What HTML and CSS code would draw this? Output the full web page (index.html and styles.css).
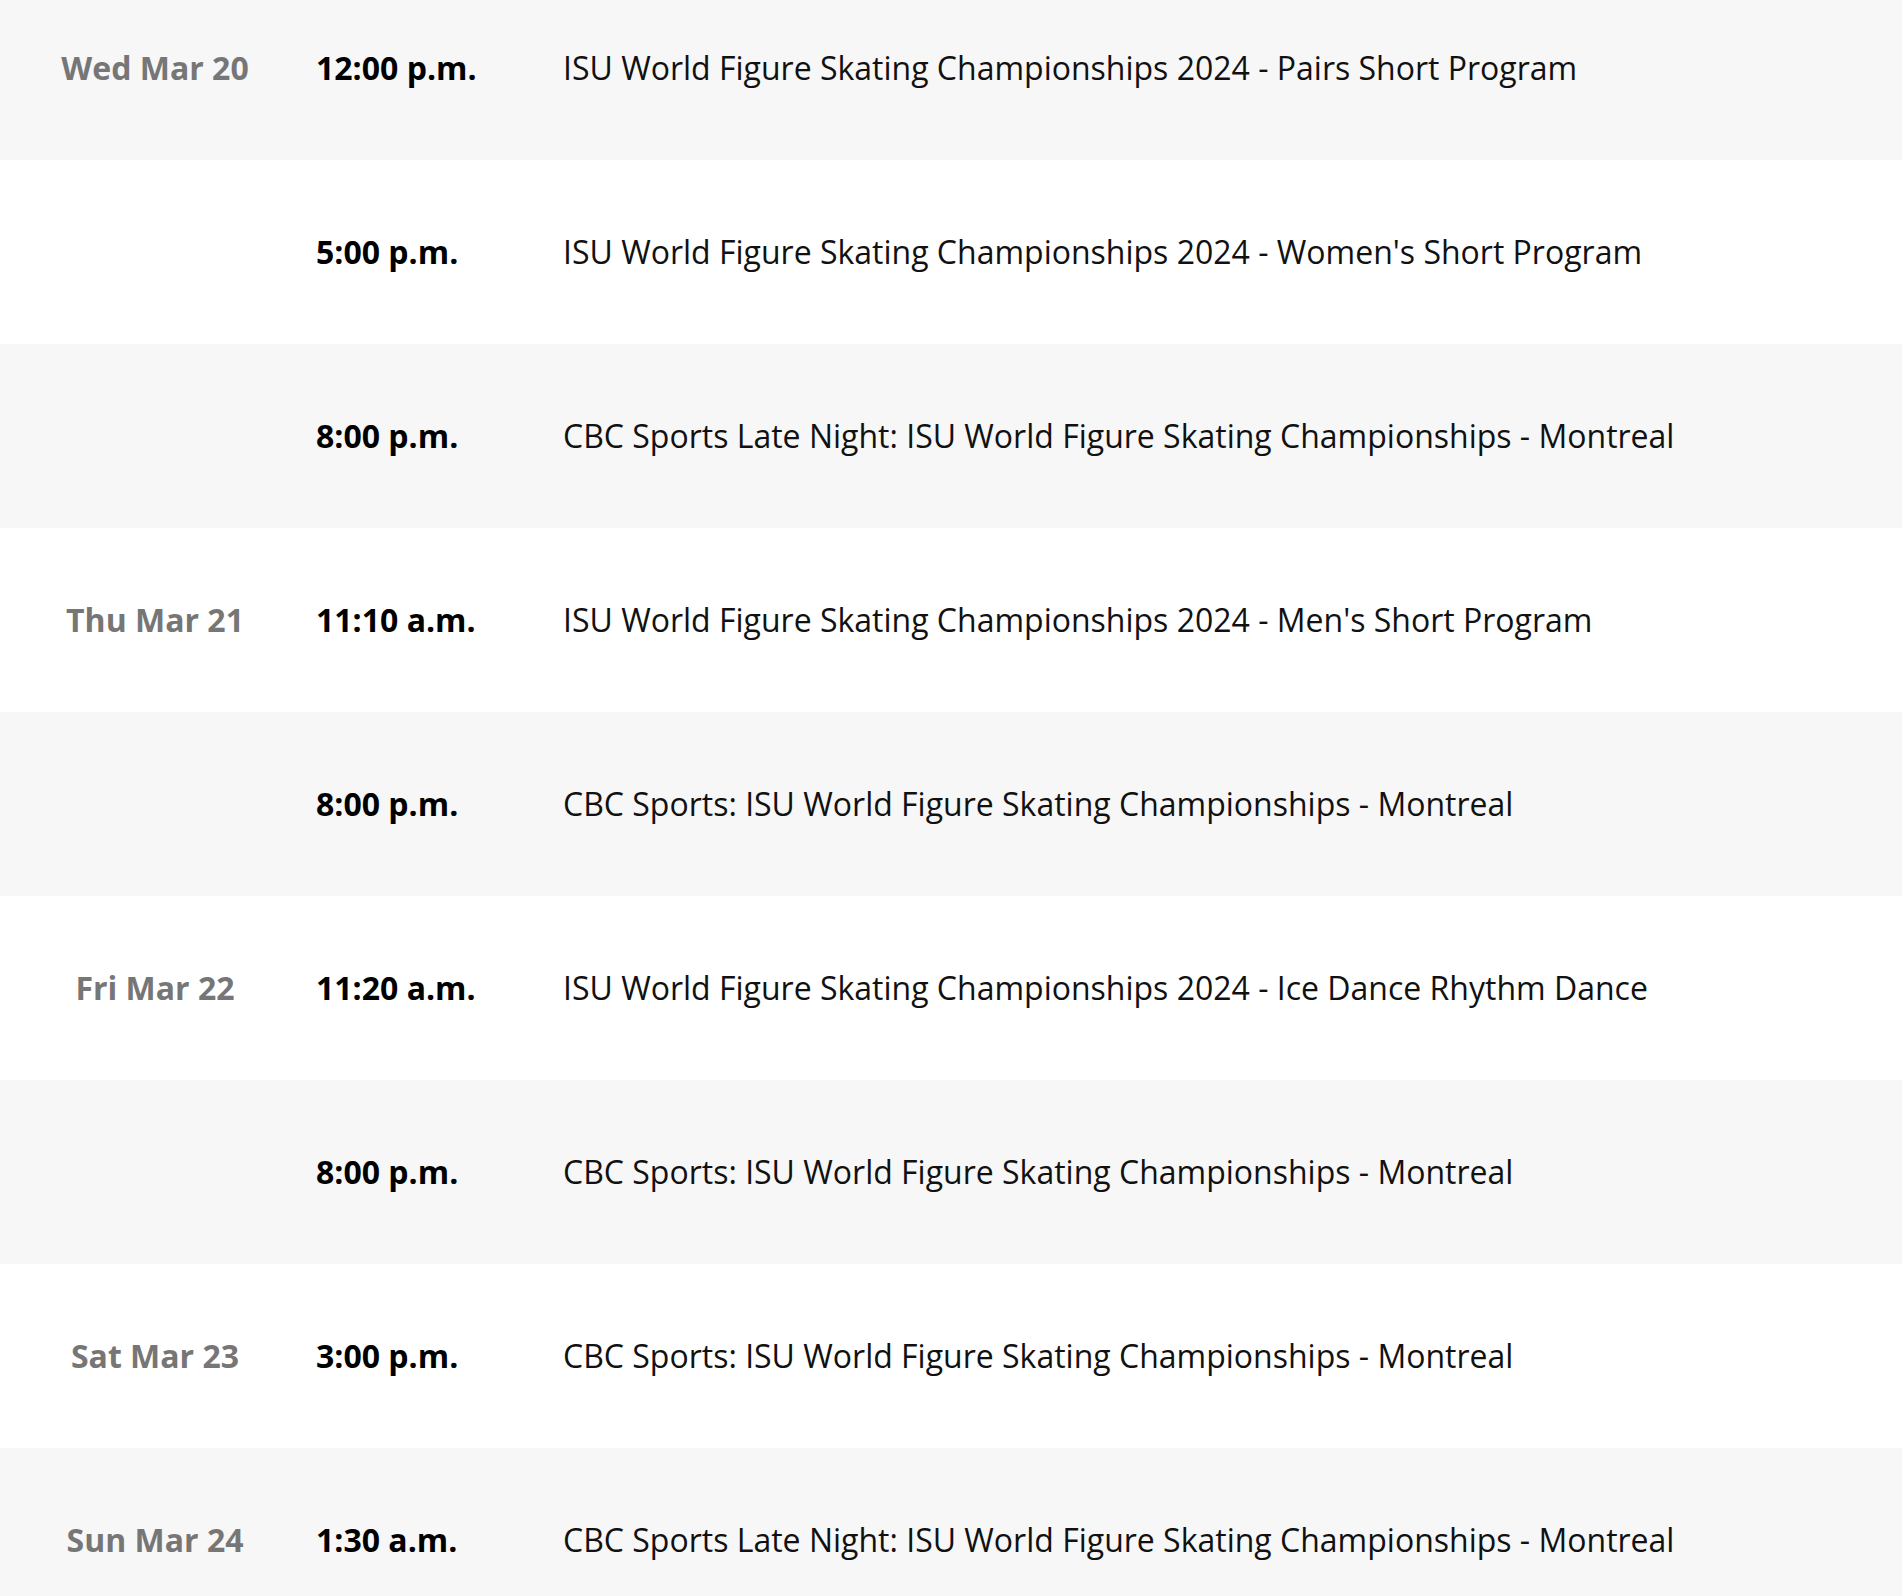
FILE: index.html
```
<!DOCTYPE html>
<html lang="en">
<head>
<meta charset="utf-8">
<title>Schedule</title>
<link rel="stylesheet" href="styles.css">
</head>
<body>
<div class="schedule">
  <div class="row shade"><div class="date">Wed Mar 20</div><div class="time">12:00 p.m.</div><div class="title">ISU World Figure Skating Championships 2024 - Pairs Short Program</div></div>
  <div class="row"><div class="date"></div><div class="time">5:00 p.m.</div><div class="title">ISU World Figure Skating Championships 2024 - Women's Short Program</div></div>
  <div class="row shade"><div class="date"></div><div class="time">8:00 p.m.</div><div class="title">CBC Sports Late Night: ISU World Figure Skating Championships - Montreal</div></div>
  <div class="row"><div class="date">Thu Mar 21</div><div class="time">11:10 a.m.</div><div class="title">ISU World Figure Skating Championships 2024 - Men's Short Program</div></div>
  <div class="row shade"><div class="date"></div><div class="time">8:00 p.m.</div><div class="title">CBC Sports: ISU World Figure Skating Championships - Montreal</div></div>
  <div class="row"><div class="date">Fri Mar 22</div><div class="time">11:20 a.m.</div><div class="title">ISU World Figure Skating Championships 2024 - Ice Dance Rhythm Dance</div></div>
  <div class="row shade"><div class="date"></div><div class="time">8:00 p.m.</div><div class="title">CBC Sports: ISU World Figure Skating Championships - Montreal</div></div>
  <div class="row"><div class="date">Sat Mar 23</div><div class="time">3:00 p.m.</div><div class="title">CBC Sports: ISU World Figure Skating Championships - Montreal</div></div>
  <div class="row shade"><div class="date">Sun Mar 24</div><div class="time">1:30 a.m.</div><div class="title">CBC Sports Late Night: ISU World Figure Skating Championships - Montreal</div></div>
</div>
</body>
</html>
```
FILE: styles.css
```
html, body {
  margin: 0;
  padding: 0;
  background: #ffffff;
}
body {
  font-family: "Open Sans", "Liberation Sans", sans-serif;
  font-size: 32px;
  color: #111111;
  overflow: hidden;
}
.schedule {
  margin-top: -24px;
}
.row {
  box-sizing: border-box;
  display: grid;
  grid-template-columns: 316px 247px 1fr;
  align-items: center;
  height: 184px;
  padding-bottom: 2px;
  background: #ffffff;
}
.row.shade {
  background: #f7f7f7;
}
.date {
  padding-right: 6px;
  text-align: center;
  font-weight: 700;
  color: #767676;
}
.time {
  font-weight: 700;
  color: #000000;
}
.title {
  font-weight: 400;
  color: #111111;
}
```
